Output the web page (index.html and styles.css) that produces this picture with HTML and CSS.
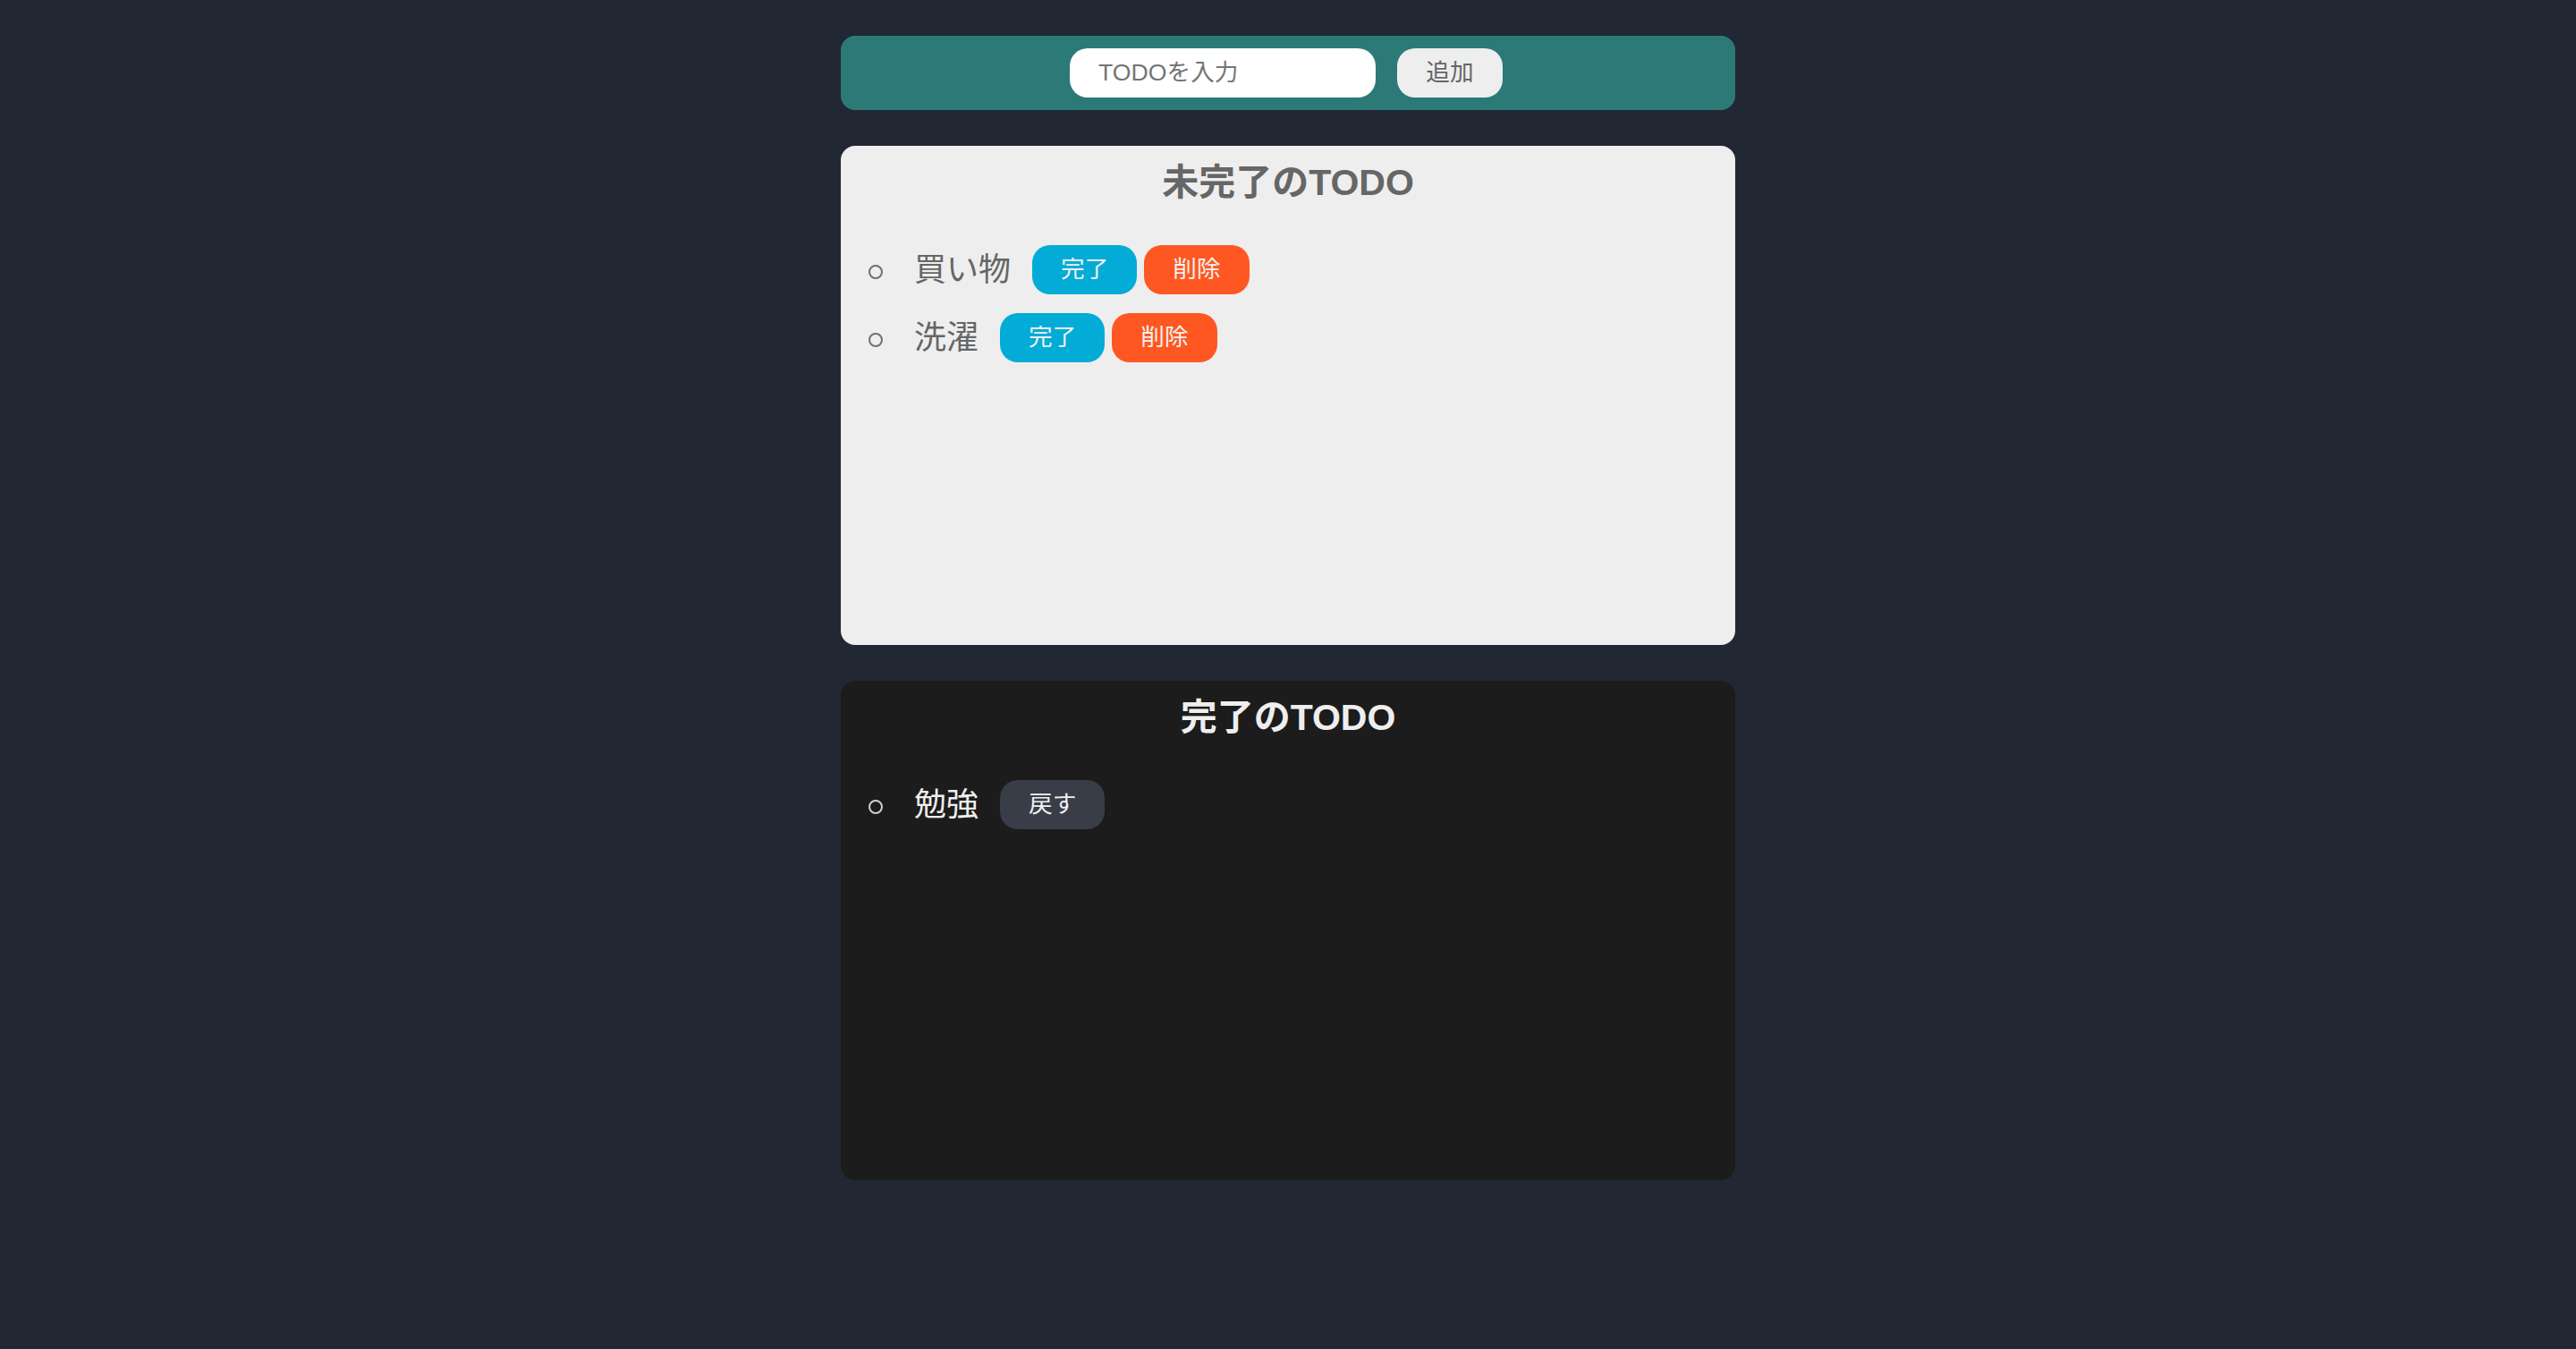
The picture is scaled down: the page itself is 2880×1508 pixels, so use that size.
FILE: index.html
```html
<!DOCTYPE html>
<html lang="ja">
<head>
<meta charset="utf-8">
<title>TODO</title>
<link rel="stylesheet" href="styles.css">
</head>
<body>
<div class="app">
  <div class="input-area">
    <input class="todo-input" type="text" placeholder="TODOを入力">
    <button class="btn btn-add">追加</button>
  </div>
  <div class="area incomplete-area">
    <p class="title">未完了のTODO</p>
    <ul class="todo-list">
      <li class="list-row">
        <p class="todo-item">買い物</p>
        <button class="btn btn-complete">完了</button>
        <button class="btn btn-delete">削除</button>
      </li>
      <li class="list-row">
        <p class="todo-item">洗濯</p>
        <button class="btn btn-complete">完了</button>
        <button class="btn btn-delete">削除</button>
      </li>
    </ul>
  </div>
  <div class="area complete-area">
    <p class="title">完了のTODO</p>
    <ul class="todo-list">
      <li class="list-row">
        <p class="todo-item">勉強</p>
        <button class="btn btn-back">戻す</button>
      </li>
    </ul>
  </div>
</div>
</body>
</html>
```

FILE: styles.css
```css
* {
  box-sizing: border-box;
}

body {
  margin: 0;
  min-height: 1508px;
  background: #212733;
  color: #666;
  font-family: "Liberation Sans", "Noto Sans CJK JP", sans-serif;
}

.app {
  width: 1000px;
  margin: 0 auto;
  padding-top: 40px;
  display: flex;
  flex-direction: column;
  gap: 40px;
}

.input-area {
  height: 83px;
  background: #2c7a78;
  border-radius: 16px;
  display: flex;
  align-items: center;
  justify-content: center;
  gap: 24px;
  padding-right: 4px;
}

.todo-input {
  width: 342px;
  height: 55px;
  padding: 0 32px;
  border: none;
  border-radius: 20px;
  background: #fff;
  color: #666;
  font-family: "Liberation Sans", "Noto Sans CJK JP", sans-serif;
  font-size: 26.67px;
  outline: none;
}

.todo-input::placeholder {
  color: #747474;
}

.btn {
  height: 55px;
  padding: 0 32px;
  border: none;
  border-radius: 20px;
  font-family: "Liberation Sans", "Noto Sans CJK JP", sans-serif;
  font-size: 26.67px;
  line-height: 1;
  color: #f0f0f0;
  cursor: pointer;
}

.btn-add {
  width: 118px;
  padding: 0;
  background: #eeeeee;
  color: #666;
}

.area {
  height: 558px;
  border-radius: 16px;
  padding-top: 17px;
}

.incomplete-area {
  background: #eeeeee;
  color: #666;
}

.complete-area {
  background: #1c1c1c;
  color: #eeeeee;
}

.title {
  margin: 0;
  text-align: center;
  font-size: 41px;
  font-weight: bold;
  line-height: 48px;
}

.todo-list {
  margin: 46px 0 0;
  padding: 0;
  list-style: none;
  display: flex;
  flex-direction: column;
  gap: 21px;
}

.list-row {
  height: 55px;
  display: flex;
  align-items: center;
}

.list-row::before {
  content: "";
  flex-shrink: 0;
  width: 12px;
  height: 12px;
  margin: 5px 35px 0 31px;
  border: 2px solid #707070;
  border-radius: 50%;
}

.complete-area .list-row::before {
  border-color: #d0d0d0;
}

.todo-item {
  margin: 0 24px 0 0;
  font-size: 36px;
  line-height: 1;
}

.btn-complete {
  background: #02acd6;
  margin-right: 8px;
}

.btn-delete {
  background: #ff5722;
}

.btn-back {
  background: #393d47;
}
```
